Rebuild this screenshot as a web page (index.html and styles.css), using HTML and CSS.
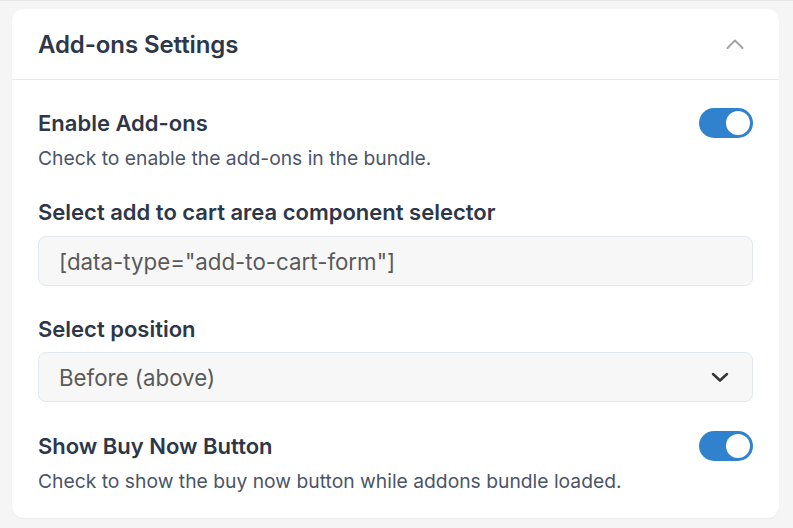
FILE: index.html
```html
<!DOCTYPE html>
<html lang="en">
<head>
<meta charset="utf-8">
<title>Add-ons Settings</title>
<link rel="stylesheet" href="styles.css">
</head>
<body>
<section class="card">
  <header class="card-header">
    <h2 class="card-title">Add-ons Settings</h2>
    <button class="collapse-btn" type="button" aria-label="Collapse">
      <svg width="24" height="24" viewBox="0 0 24 24" fill="none" stroke="currentColor" stroke-width="2" stroke-linecap="round" stroke-linejoin="round"><polyline points="4.5 16 12 8.5 19.5 16"/></svg>
    </button>
  </header>
  <div class="card-body">
    <div class="field">
      <div class="field-row">
        <label class="field-label">Enable Add-ons</label>
        <span class="switch on"><span class="switch-thumb"></span></span>
      </div>
      <p class="field-help">Check to enable the add-ons in the bundle.</p>
    </div>

    <div class="field">
      <label class="field-label">Select add to cart area component selector</label>
      <div class="input">[data-type="add-to-cart-form"]</div>
    </div>

    <div class="field">
      <label class="field-label">Select position</label>
      <div class="input select">
        <span>Before (above)</span>
        <svg width="24" height="24" viewBox="0 0 24 24" fill="none" stroke="currentColor" stroke-width="2.4" stroke-linecap="round" stroke-linejoin="round"><polyline points="5 9 12 15.5 19 9"/></svg>
      </div>
    </div>

    <div class="field field-last">
      <div class="field-row">
        <label class="field-label">Show Buy Now Button</label>
        <span class="switch on"><span class="switch-thumb"></span></span>
      </div>
      <p class="field-help">Check to show the buy now button while addons bundle loaded.</p>
    </div>
  </div>
</section>
</body>
</html>
```

FILE: styles.css
```css
html, body {
  margin: 0;
  padding: 0;
}

body {
  background: #f5f5f5;
  border-top: 1px solid #e6e6e6;
  font-family: Inter, "Noto Sans", sans-serif;
  color: #2d3748;
  padding: 8px 14px 0 12px;
  height: 528px;
  box-sizing: border-box;
}

.card {
  background: #fff;
  border-radius: 12px;
  box-shadow: 0 1px 2px rgba(0, 0, 0, 0.04);
}

.card-header {
  display: flex;
  align-items: center;
  justify-content: space-between;
  height: 70px;
  padding: 0 26px;
  border-bottom: 1px solid #e8e8e8;
}

.card-title {
  margin: 0;
  font-size: 24px;
  font-weight: 600;
  color: #2d3748;
  letter-spacing: -0.1px;
}

.collapse-btn {
  border: 0;
  background: none;
  padding: 0;
  color: #a3a3a3;
  display: flex;
  margin-right: 6px;
}

.card-body {
  padding: 28px 26px 26px;
  display: flex;
  flex-direction: column;
  gap: 28px;
}

.field {
  display: flex;
  flex-direction: column;
}

.field-last {
  margin-top: 1px;
}

.field-row {
  display: flex;
  align-items: center;
  justify-content: space-between;
}

.field-label {
  font-size: 22px;
  font-weight: 600;
  color: #2d3748;
  line-height: 30px;
}

.field-help {
  margin: 9px 0 0;
  font-size: 19.3px;
  color: #4a5568;
  line-height: 22px;
}

.switch {
  width: 54px;
  height: 30px;
  border-radius: 15px;
  background: #3182ce;
  display: flex;
  align-items: center;
  justify-content: flex-end;
  padding: 3px;
  box-sizing: border-box;
}

.switch-thumb {
  width: 24px;
  height: 24px;
  border-radius: 50%;
  background: #fff;
}

.input {
  margin-top: 9px;
  height: 50px;
  box-sizing: border-box;
  border: 1px solid #e2e8f0;
  border-radius: 8px;
  background: #f7f7f7;
  padding: 0 20px;
  display: flex;
  align-items: center;
  font-size: 22.3px;
  color: #5a5a5a;
}

.select {
  margin-top: 8px;
  justify-content: space-between;
  padding-right: 20px;
}

.select svg {
  color: #333;
}
```
